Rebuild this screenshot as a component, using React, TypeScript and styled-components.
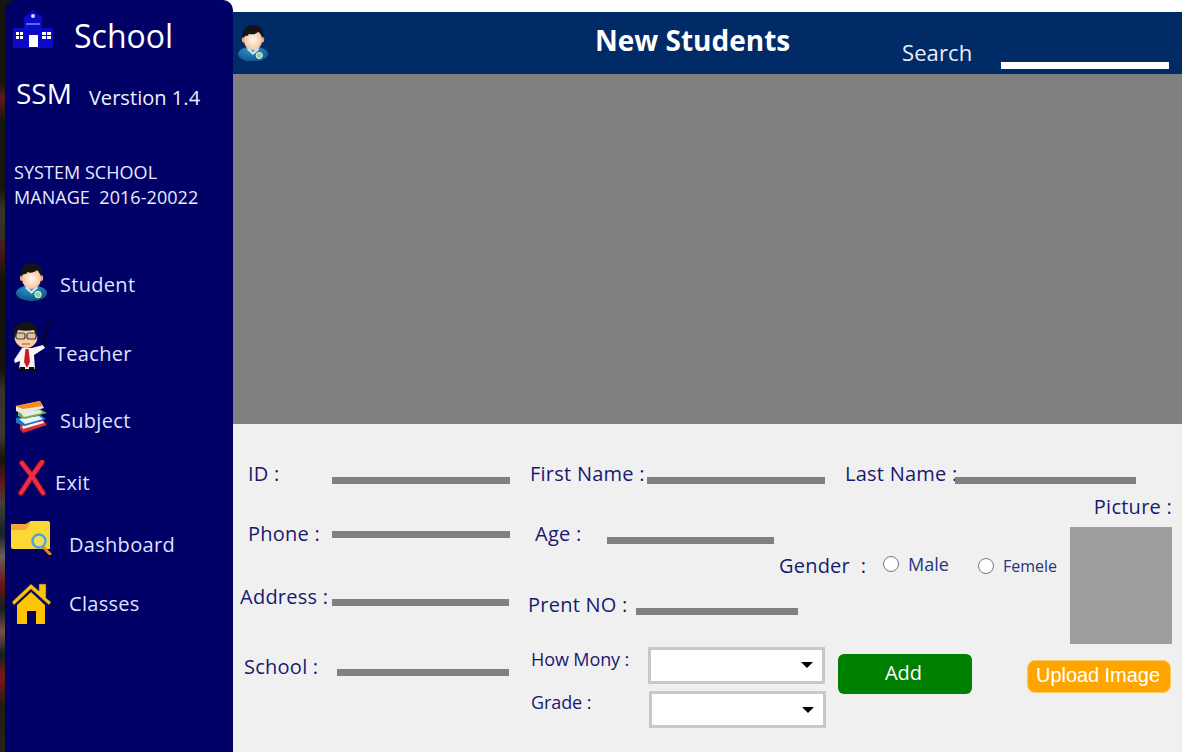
import React from 'react';
import styled, { createGlobalStyle } from 'styled-components';

const GlobalStyle = createGlobalStyle`
  html, body {
    margin: 0;
    padding: 0;
    background: #fff;
    overflow: hidden;
  }
  * { box-sizing: border-box; }
  body { font-family: "Open Sans", "Noto Sans", "Liberation Sans", sans-serif; }
`;

const Page = styled.div`
  width: 1182px;
  height: 752px;
  display: flex;
  overflow: hidden;
`;

// the blurred desktop wallpaper that shows at the window's left edge
const Wallpaper = styled.div`
  width: 5px;
  flex: none;
  background: linear-gradient(180deg,
    #15150c 0%, #15150c 11%, #5c1c1a 13%, #17160e 16%, #17160e 25%, #37352c 28%, #33302a 31%,
    #4a1a18 33%, #14140c 37%, #14140c 49%, #35332c 52%, #3c3a32 58%, #14140c 61%,
    #5e1818 64%, #45403a 67%, #14202a 71%, #6a5e5c 74%, #6e1616 77.5%, #14201f 81%,
    #7a5048 84%, #14201f 87%, #7a1818 90%, #1e1c14 94%, #25231a 100%);
`;

/* sidebar */
const SidebarShell = styled.div`
  width: 228px;
  flex: none;
  background: linear-gradient(90deg, #15150c 50%, #fff 50%);
`;

const Sidebar = styled.aside`
  height: 100%;
  background: #000066;
  border-radius: 10px 10px 0 0;
  color: #fff;
  display: flex;
  flex-direction: column;
`;

const Brand = styled.div`
  height: 66px;
  padding: 10px 0 0 8px;
  display: flex;
  align-items: flex-start;
  gap: 21px;
  font-size: 32px;
  line-height: 51px;
  font-weight: 400;

  svg { display: block; }
`;

const VersionRow = styled.div`
  height: 47px;
  padding: 6px 0 0 11px;
  display: flex;
  align-items: baseline;
  gap: 17px;
  font-size: 28px;
  font-weight: 400;
  line-height: 42px;
`;

const Version = styled.span`
  margin-top: 1px;
  font-size: 20px;
  font-weight: 400;
  letter-spacing: 0.05px;
  color: #f0f2ff;
  transform: translateY(1px);
`;

const Tagline = styled.p`
  margin: 47px 0 0;
  padding-left: 9px;
  font-size: 18px;
  line-height: 25px;
  letter-spacing: 0.05px;
  color: #e8ebff;
  white-space: pre;
`;

const Nav = styled.nav`
  margin-top: 40px;
  display: flex;
  flex-direction: column;
`;

const NavItem = styled.div<{ $height: number; $textLeft: number }>`
  height: ${({ $height }) => $height}px;
  display: grid;
  grid-template-columns: ${({ $textLeft }) => $textLeft}px 1fr;
  align-items: center;
  font-size: 20px;
  letter-spacing: 0.3px;
  color: #dfe3ff;
`;

const NavIcon = styled.span<{ $indent: number; $lift: number }>`
  display: flex;
  padding-left: ${({ $indent }) => $indent}px;
  margin-bottom: ${({ $lift }) => $lift * 2}px;
`;

/* main column */
const Main = styled.main`
  flex: 1;
  min-width: 0;
  display: flex;
  flex-direction: column;
  background: #fff;
  padding-top: 12px;
`;

const Header = styled.header`
  height: 62px;
  flex: none;
  background: #002b66;
  color: #fff;
  padding-left: 5px;
  display: flex;
  align-items: center;
`;

const Title = styled.h1`
  margin: 0 0 7px 327px;
  width: 307px;
  font-size: 28px;
  font-weight: 700;
  white-space: nowrap;
`;

const SearchLabel = styled.label`
  width: 99px;
  margin-top: 17px;
  font-size: 22px;
  letter-spacing: 0.1px;
  color: #e9eef8;
`;

const SearchInput = styled.input`
  width: 168px;
  height: 7px;
  margin-top: 44px;
  padding: 0;
  border: 0;
  background: #fff;
`;

const Preview = styled.section`
  height: 350px;
  flex: none;
  background: #808080;
`;

const Form = styled.form`
  flex: 1;
  background: #f0f0f0;
  display: grid;
  grid-template-columns: 292px 254px 59px 134px 210px;
  grid-template-rows: 71px 60px 30px 61px 45px 61px;
  color: #191970;
`;

const Field = styled.div<{ $left: number; $span?: string; $row: string }>`
  grid-column: ${({ $span }) => $span ?? 'auto'};
  grid-row: ${({ $row }) => $row};
  margin-left: ${({ $left }) => $left}px;
  display: flex;
  align-items: flex-start;
  font-size: 20px;
  white-space: nowrap;
`;

const FieldLabel = styled.label<{ $width: number; $top: number; $small?: boolean }>`
  width: ${({ $width }) => $width}px;
  flex: none;
  margin-top: ${({ $top }) => $top}px;
  line-height: 28px;
  font-size: ${({ $small }) => ($small ? '18px' : '20px')};
  letter-spacing: ${({ $small }) => ($small ? '-0.1px' : '0.25px')};
`;

const LineInput = styled.input<{ $width: number; $top: number }>`
  width: ${({ $width }) => $width}px;
  height: 7px;
  flex: none;
  margin-top: ${({ $top }) => $top}px;
  padding: 0;
  border: 0;
  background: #808080;
`;

const GenderRow = styled.div`
  grid-column: 3 / 6;
  grid-row: 3;
  display: flex;
  align-items: flex-start;
  font-size: 20px;
  white-space: nowrap;
`;

const GenderLabel = styled.span`
  width: 104px;
  margin-top: -3px;
  line-height: 28px;
  letter-spacing: 0.2px;
  white-space: pre;
`;

const RadioOption = styled.label<{ $width: number; $top: number; $size: number }>`
  width: ${({ $width }) => $width}px;
  margin-top: ${({ $top }) => $top}px;
  display: flex;
  align-items: center;
  gap: 9px;
  font-size: ${({ $size }) => $size}px;
  line-height: 20px;
  color: #26357f;
`;

const Radio = styled.input.attrs({ type: 'radio' })`
  width: 16px;
  height: 16px;
  margin: 0;
`;

const PictureColumn = styled.div`
  grid-column: 5;
  grid-row: 2 / 5;
  padding: 0 10px 0 98px;
  display: flex;
  flex-direction: column;
  align-items: flex-end;
`;

const PictureLabel = styled.span`
  height: 32px;
  font-size: 20px;
  line-height: 24px;
  letter-spacing: 0.25px;
  white-space: nowrap;
`;

const PictureBox = styled.div`
  width: 102px;
  height: 117px;
  flex: none;
  background: #9e9e9e;
`;

const SelectBox = styled.div<{ $left: number; $row: number; $top: number; $caret: number }>`
  grid-column: 2 / 4;
  grid-row: ${({ $row }) => $row};
  margin: ${({ $top }) => $top}px 0 0 ${({ $left }) => $left}px;
  width: 177px;
  height: 37px;
  position: relative;

  &::after {
    content: '';
    position: absolute;
    right: 12px;
    top: ${({ $caret }) => $caret}px;
    border-left: 6px solid transparent;
    border-right: 6px solid transparent;
    border-top: 6px solid #000;
    pointer-events: none;
  }
`;

const Select = styled.select`
  width: 100%;
  height: 100%;
  appearance: none;
  border: 3px solid #c8c8c8;
  border-radius: 0;
  background: #fff;
`;

const AddButton = styled.button`
  grid-column: 4;
  grid-row: 5 / 7;
  align-self: start;
  width: 134px;
  height: 40px;
  margin-top: 8px;
  border: 0;
  border-radius: 6px;
  background: #008000;
  color: #fff;
  font-family: "Open Sans", sans-serif;
  font-size: 20px;
  letter-spacing: -0.1px;
  padding: 0 3px 3px 0;
`;

const UploadButton = styled.button`
  grid-column: 5;
  grid-row: 5 / 7;
  align-self: start;
  justify-self: start;
  width: 144px;
  height: 33px;
  margin: 14px 0 0 55px;
  border: 1px solid #ffc966;
  border-radius: 8px;
  background: #ffa500;
  color: #fff;
  font-family: "Liberation Sans", sans-serif;
  font-size: 20px;
  letter-spacing: -0.05px;
  padding: 0 2px 2px 0;
  white-space: nowrap;
`;

function SchoolIcon() {
  return (
    <svg width="40" height="38" viewBox="0 0 40 38">
      <path d="M20 0l10 8h-1v10h11v20H0V18h11V8h-1z" fill="#0a0ac8" />
      <circle cx="20" cy="6" r="2" fill="#d5dcff" />
      <rect x="13" y="13" width="14" height="2" fill="#5a6be8" />
      <path d="M3 22h3v3H3zM7 22h3v3H7zM3 26h3v3H3zM7 26h3v3H7zM29 22h4v3h-4zM34 22h4v3h-4zM29 26h4v3h-4zM34 26h4v3h-4z" fill="#fff" />
      <rect x="16" y="25" width="9" height="12" fill="#fff" />
    </svg>
  );
}

function StudentIcon({ size = 31 }: { size?: number }) {
  return (
    <svg width={size} height={size * 1.23} viewBox="0 0 31 38">
      <defs>
        <radialGradient id="studentBody" cx="45%" cy="25%" r="80%">
          <stop offset="0%" stopColor="#2b92cf" />
          <stop offset="100%" stopColor="#0d4f80" />
        </radialGradient>
        <radialGradient id="studentFace" cx="50%" cy="50%" r="60%">
          <stop offset="0%" stopColor="#fff6ee" />
          <stop offset="100%" stopColor="#f5b98d" />
        </radialGradient>
      </defs>
      <ellipse cx="15.500" cy="30" rx="15.500" ry="8" fill="url(#studentBody)" />
      <path d="M11 23l4.500 5 4.500-5 2 2-6.500 6-6.500-6z" fill="#cfe4ee" />
      <ellipse cx="5.500" cy="15" rx="1.600" ry="3" fill="#eda878" />
      <ellipse cx="25.500" cy="15" rx="1.600" ry="3" fill="#eda878" />
      <ellipse cx="15.500" cy="15.500" rx="9.500" ry="10.500" fill="url(#studentFace)" />
      <path d="M5 14C3 5 9 0 16 0c7 0 11 5 10 14-1-3-2-6-5-7-3 3-7 3-10 2 0 2-1 2-2 2-2 0-3 1-4 3z" fill="#141414" />
      <circle cx="22" cy="31.500" r="3.200" fill="#8ed397" stroke="#e8f5e8" />
    </svg>
  );
}

function TeacherIcon() {
  return (
    <svg width="37" height="52" viewBox="0 0 37 52">
      <path d="M37 0l-6 24" stroke="#050520" strokeWidth="2" />
      <path d="M10 26h10l11-3 2 3-11 7 1 14H7l1-8-5 2-1-3z" fill="#f6f6f6" />
      <path d="M13.500 27h3l1.500 13-3 6-3-6z" fill="#d8141c" />
      <path d="M8 45h5v4l3 1H6zM17 45h5l1 5h-6z" fill="#0c0c0c" />
      <ellipse cx="14" cy="15" rx="11.500" ry="11" fill="#fbcba8" />
      <path d="M2 15C0 5 7 0 14 0s13 4 12 14l-1 2-3-8c-5 1-11 1-16 0l-3 8z" fill="#141414" />
      <rect x="4" y="11" width="9" height="6" rx="2" fill="#d8c3ac" stroke="#4b4034" strokeWidth="1.200" />
      <rect x="15" y="11" width="9" height="6" rx="2" fill="#d8c3ac" stroke="#4b4034" strokeWidth="1.200" />
      <path d="M10 22h8" stroke="#a6503a" />
    </svg>
  );
}

function BooksIcon() {
  return (
    <svg width="33" height="32" viewBox="0 0 33 32">
      <path d="M5 23l23-4 4 5-24 8-3-4z" fill="#d62c35" />
      <path d="M7 25l21-5 1 2-21 6z" fill="#f3f3f3" />
      <path d="M1 17l23-4 7 5-21 7-9-3z" fill="#1d74c4" />
      <path d="M4 18l20-3 4 3-18 5z" fill="#eef2f4" />
      <path d="M3 10l22-2 7 4-22 6-7-3z" fill="#6fae55" />
      <path d="M5 11l20-2 2 3-18 4z" fill="#e6ebe6" />
      <path d="M1 5L25 0l4 7-21 6-7-3z" fill="#e8e8e2" />
      <path d="M0 5L25 0l3 5L8 8z" fill="#f28c1e" />
    </svg>
  );
}

function ExitIcon() {
  return (
    <svg width="28" height="36" viewBox="0 0 28 36">
      <path d="M4 3l10 13L24 2M3 33l11-17 11 17" fill="none" stroke="#7c1030" strokeWidth="6" strokeLinecap="round" />
      <path d="M4 3l10 13L24 2M3 33l11-17 11 17" fill="none" stroke="#f02c44" strokeWidth="4" strokeLinecap="round" />
    </svg>
  );
}

function FolderIcon() {
  return (
    <svg width="41" height="34" viewBox="0 0 41 34">
      <path d="M0 4q0-1 1-1h14l5-3h17q2 0 2 2v26H2q-2 0-2-2z" fill="#fdd835" />
      <path d="M0 4q0-1 1-1h14l5-3-3 6-3 3H0z" fill="#f4a63c" />
      <path d="M32 26l7 7" stroke="#e08a1e" strokeWidth="3" strokeLinecap="round" />
      <circle cx="28" cy="20" r="6.500" fill="#f6d85a" stroke="#4aa8d8" strokeWidth="2.500" />
    </svg>
  );
}

function HomeIcon() {
  return (
    <svg width="41" height="41" viewBox="0 0 41 41">
      <path d="M6 22L20 9l14 13v19H25V28h-9v13H6z" fill="#ffc400" />
      <path d="M1 19L20 1l8 7V1h7v14l5 4-2 3L20 6 3 22z" fill="#ffc107" stroke="#4a4a50" strokeWidth=".6" />
    </svg>
  );
}

const navItems = [
  { label: 'Student', height: 68, textLeft: 55, indent: 11, lift: 2, icon: <StudentIcon /> },
  { label: 'Teacher', height: 70, textLeft: 50, indent: 7, lift: 5, icon: <TeacherIcon /> },
  { label: 'Subject', height: 64, textLeft: 55, indent: 10, lift: 3, icon: <BooksIcon /> },
  { label: 'Exit', height: 60, textLeft: 50, indent: 13, lift: 4, icon: <ExitIcon /> },
  { label: 'Dashboard', height: 64, textLeft: 64, indent: 6, lift: 6, icon: <FolderIcon /> },
  { label: 'Classes', height: 54, textLeft: 64, indent: 6, lift: 0, icon: <HomeIcon /> },
];

function App() {
  return (
    <Page>
      <GlobalStyle />
      <Wallpaper />
      <SidebarShell>
        <Sidebar>
          <Brand>
            <SchoolIcon />
            School
          </Brand>
          <VersionRow>
            SSM
            <Version>Verstion 1.4</Version>
          </VersionRow>
          <Tagline>{'SYSTEM SCHOOL\nMANAGE  2016-20022'}</Tagline>
          <Nav>
            {navItems.map((item) => (
              <NavItem key={item.label} $height={item.height} $textLeft={item.textLeft}>
                <NavIcon $indent={item.indent} $lift={item.lift}>{item.icon}</NavIcon>
                {item.label}
              </NavItem>
            ))}
          </Nav>
        </Sidebar>
      </SidebarShell>

      <Main>
        <Header>
          <StudentIcon size={30} />
          <Title>New Students</Title>
          <SearchLabel>Search</SearchLabel>
          <SearchInput />
        </Header>
        <Preview />
        <Form>
          <Field $left={15} $row="1" $span="1">
            <FieldLabel $width={84} $top={36}>ID :</FieldLabel>
            <LineInput $width={178} $top={53} />
          </Field>
          <Field $left={5} $row="1" $span="2 / 4">
            <FieldLabel $width={117} $top={36}>First Name :</FieldLabel>
            <LineInput $width={178} $top={53} />
          </Field>
          <Field $left={7} $row="1" $span="4 / 6">
            <FieldLabel $width={110} $top={36}>Last Name :</FieldLabel>
            <LineInput $width={181} $top={53} />
          </Field>

          <Field $left={15} $row="2" $span="1">
            <FieldLabel $width={84} $top={25}>Phone :</FieldLabel>
            <LineInput $width={178} $top={36} />
          </Field>
          <Field $left={10} $row="2" $span="2">
            <FieldLabel $width={72} $top={25}>Age :</FieldLabel>
            <LineInput $width={167} $top={42} />
          </Field>

          <GenderRow>
            <GenderLabel>{'Gender  :'}</GenderLabel>
            <RadioOption $width={95} $top={-1} $size={18}>
              <Radio name="gender" />
              Male
            </RadioOption>
            <RadioOption $width={90} $top={1} $size={16}>
              <Radio name="gender" />
              Femele
            </RadioOption>
          </GenderRow>

          <PictureColumn>
            <PictureLabel>Picture :</PictureLabel>
            <PictureBox />
          </PictureColumn>

          <Field $left={7} $row="4" $span="1">
            <FieldLabel $width={92} $top={-2}>Address :</FieldLabel>
            <LineInput $width={177} $top={14} />
          </Field>
          <Field $left={3} $row="4" $span="2 / 4">
            <FieldLabel $width={108} $top={6}>Prent NO :</FieldLabel>
            <LineInput $width={162} $top={23} />
          </Field>

          <Field $left={11} $row="5 / 7" $span="1">
            <FieldLabel $width={93} $top={7}>School :</FieldLabel>
            <LineInput $width={172} $top={23} />
          </Field>

          <Field $left={6} $row="5" $span="2">
            <FieldLabel $width={110} $top={-1} $small>How Mony :</FieldLabel>
          </Field>
          <SelectBox $left={123} $row={5} $top={1} $caret={15}>
            <Select />
          </SelectBox>
          <Field $left={6} $row="6" $span="2">
            <FieldLabel $width={110} $top={-3} $small>Grade :</FieldLabel>
          </Field>
          <SelectBox $left={124} $row={6} $top={0} $caret={16}>
            <Select />
          </SelectBox>

          <AddButton type="button">Add</AddButton>
          <UploadButton type="button">Upload Image</UploadButton>
        </Form>
      </Main>
    </Page>
  );
}

export default App;
